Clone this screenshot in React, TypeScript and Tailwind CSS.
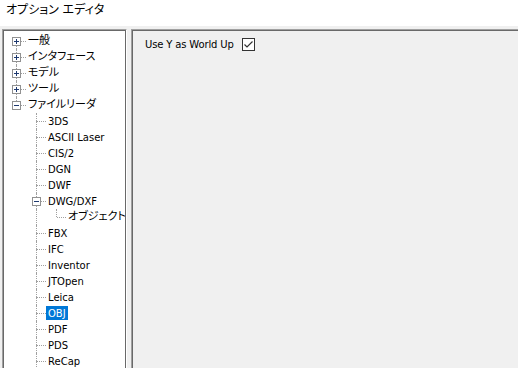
import React from "react";

type Node = {
  label: string;
  children?: Node[];
  expanded?: boolean;
  hasChildren?: boolean;
  selected?: boolean;
  more?: boolean;
};

const tree: Node[] = [
  { label: "一般", hasChildren: true },
  { label: "インタフェース", hasChildren: true },
  { label: "モデル", hasChildren: true },
  { label: "ツール", hasChildren: true },
  {
    label: "ファイルリーダ",
    expanded: true,
    children: [
      { label: "3DS" },
      { label: "ASCII Laser" },
      { label: "CIS/2" },
      { label: "DGN" },
      { label: "DWF" },
      {
        label: "DWG/DXF",
        expanded: true,
        children: [{ label: "オブジェクト プロパティ" }],
      },
      { label: "FBX" },
      { label: "IFC" },
      { label: "Inventor" },
      { label: "JTOpen" },
      { label: "Leica" },
      { label: "OBJ", selected: true },
      { label: "PDF" },
      { label: "PDS" },
      { label: "ReCap", more: true },
    ],
  },
];

type Row = {
  node: Node;
  level: number;
  guides: boolean[];
  hasNext: boolean;
  hasPrev: boolean;
};

function flatten(nodes: Node[], level: number, guides: boolean[], out: Row[]) {
  nodes.forEach((node, i) => {
    const hasNext = i < nodes.length - 1 || !!node.more;
    const hasPrev = i > 0 || level > 0;
    out.push({ node, level, guides, hasNext, hasPrev });
    if (node.expanded && node.children) {
      flatten(node.children, level + 1, [...guides, hasNext], out);
    }
  });
  return out;
}

const rows = flatten(tree, 0, [], []);

function Expander({ open }: { open: boolean }) {
  return (
    <div className="absolute left-[6px] top-[4px] w-[9px] h-[9px] border border-[#919191] bg-white">
      <div className="absolute left-[1px] top-[3px] w-[5px] h-px bg-[#1f3a70]" />
      {!open && <div className="absolute left-[3px] top-[1px] w-px h-[5px] bg-[#1f3a70]" />}
    </div>
  );
}

function TreeRow({ row }: { row: Row }) {
  const { node, level, guides, hasNext, hasPrev } = row;
  const jp = /[\u3000-\u9fff]/.test(node.label);
  const hasKids = !!(node.children || node.hasChildren);
  return (
    <div className="flex h-4 items-center whitespace-nowrap">
      {guides.map((g, k) => (
        <div key={k} className="relative w-5 h-4 shrink-0">
          {g && <div className="absolute left-[10px] top-0 bottom-0 border-l border-dotted border-[#a0a0a0]" />}
        </div>
      ))}
      <div className="relative w-5 h-4 shrink-0">
        {hasPrev && <div className="absolute left-[10px] top-0 h-[8px] border-l border-dotted border-[#a0a0a0]" />}
        {hasNext && <div className="absolute left-[10px] top-[8px] bottom-0 border-l border-dotted border-[#a0a0a0]" />}
        <div className="absolute left-[11px] top-[8px] w-[9px] border-t border-dotted border-[#a0a0a0]" />
        {hasKids && <Expander open={!!node.expanded} />}
      </div>
      <span
        className={
          "px-[2px] h-[14px] flex items-center " +
          (node.selected ? "bg-[#0078d7] text-white " : "text-black ") +
          (jp ? "text-[11px] [font-feature-settings:'palt']" : "text-[10px]")
        }
      >
        {node.label}
      </span>
    </div>
  );
}

export default function App() {
  return (
    <div
      className="w-[518px] h-[368px] overflow-hidden bg-[#f0f0f0] flex flex-col"
      style={{ fontFamily: '"DejaVu Sans", "Noto Sans CJK JP", sans-serif' }}
    >
      <div className="h-[26px] shrink-0 bg-white pl-[6px] pt-[2px] text-[12px] leading-[16px] text-black [font-feature-settings:'palt']">
        オプション エディタ
      </div>
      <div className="flex flex-1 min-h-0 pt-[3px] pl-[2px] gap-[4px]">
        <div className="w-[125px] h-[400px] shrink-0 border-t border-l border-[#a0a0a0] border-r border-r-white border-b border-b-white">
          <div className="h-full border-t border-l border-[#696969] border-r border-r-[#696969] border-b border-b-[#e3e3e3] bg-white overflow-hidden pt-[2px] pl-[2px]">
            {rows.map((r, i) => (
              <TreeRow key={i} row={r} />
            ))}
          </div>
        </div>
        <div className="w-[400px] h-[400px] shrink-0 border-t border-l border-[#a0a0a0]">
          <div className="h-full border-t border-l border-[#696969] pl-[12px] pt-[5px]">
            <div className="flex items-center h-[16px]">
              <span className="text-[10px] tracking-[-0.15px] text-black">Use Y as World Up</span>
              <div className="ml-[8px] w-[13px] h-[13px] border border-[#333333] bg-white flex items-center justify-center">
                <svg width="11" height="11" viewBox="0 0 11 11">
                  <polyline points="1.5,5.5 4,8 9.5,2.5" fill="none" stroke="#333333" strokeWidth="1.2" />
                </svg>
              </div>
            </div>
          </div>
        </div>
      </div>
    </div>
  );
}
